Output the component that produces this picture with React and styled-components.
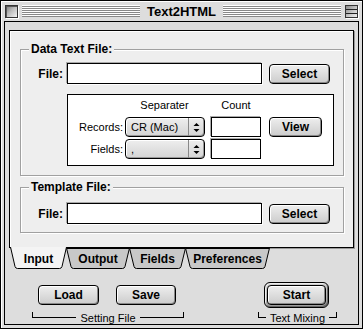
import React from 'react'
import styled, { createGlobalStyle } from 'styled-components'

const GlobalStyle = createGlobalStyle`
    html, body {
        margin: 0;
        padding: 0;
        background: #ffffff;
    }
    * {
        box-sizing: border-box;
    }
`;

const Window = styled.div`
    width: 363px;
    height: 329px;
    border: 1px solid #000;
    background: #dddddd;
    padding: 0 3px 3px 3px;
    display: flex;
    flex-direction: column;
    font-family: "Liberation Sans", Arial, sans-serif;
    color: #000;
    box-shadow: inset 1px 1px 0 #fff;
`;

const TitleBar = styled.div`
    height: 20px;
    display: flex;
    align-items: center;
    padding: 0 1px;
    gap: 4px;
`;

const CloseBox = styled.div`
    width: 13px;
    height: 13px;
    border: 1px solid #333;
    background: linear-gradient(135deg, #777 0%, #bbb 45%, #f4f4f4 100%);
    box-shadow: inset 1px 1px 0 #555, 1px 1px 0 #fff;
`;

const CollapseBox = styled.div`
    width: 13px;
    height: 13px;
    border: 1px solid #333;
    background: linear-gradient(135deg, #888 0%, #ccc 60%, #eee 100%);
    display: flex;
    flex-direction: column;
    justify-content: space-evenly;
    box-shadow: 1px 1px 0 #fff;
    & > span {
        height: 1px;
        background: #222;
    }
`;

const Stripes = styled.div`
    flex: 1;
    height: 12px;
    background: repeating-linear-gradient(to bottom, #ffffff 0 1px, #888888 1px 2px);
`;

const Title = styled.div`
    font-weight: bold;
    font-size: 13px;
    padding: 0 3px;
`;

const Content = styled.div`
    flex: 1;
    border: 1px solid #000;
    background: #dddddd;
    padding: 8px 4px 0 4px;
    display: flex;
    flex-direction: column;
`;

const TabPanel = styled.div`
    height: 218px;
    border: 1px solid #000;
    background: #eeeeee;
    box-shadow: inset 1px 1px 0 #fff, 1px 1px 0 #999;
    padding: 18px 9px 0 10px;
    display: flex;
    flex-direction: column;
    gap: 11px;
`;

const Group = styled.div`
    position: relative;
    border: 1px solid #a0a0a0;
    box-shadow: inset 1px 1px 0 #fff, 1px 1px 0 #fff;
    padding: ${p => p.$top}px 0 ${p => p.$bottom}px 0;
`;

const GroupTitle = styled.div`
    position: absolute;
    top: -8px;
    left: 8px;
    padding: 0 2px;
    background: #eeeeee;
    font-weight: bold;
    font-size: 12px;
    line-height: 14px;
`;

const Row = styled.div`
    display: flex;
    align-items: center;
`;

const BoldLabel = styled.div`
    width: 42px;
    text-align: right;
    font-weight: bold;
    font-size: 12px;
    margin-right: 4px;
`;

const TextField = styled.div`
    width: ${p => p.$w}px;
    height: ${p => p.$h || 21}px;
    border: 1px solid #000;
    background: #fff;
    box-shadow: -1px -1px 0 #aaa, 1px 1px 0 #fff;
`;

const Button = styled.div`
    width: ${p => p.$w}px;
    height: 20px;
    border: 1px solid #000;
    border-radius: 4px;
    background: linear-gradient(to bottom, #eeeeee, #cccccc);
    box-shadow: inset 1px 1px 0 #fff, inset -1px -1px 0 #888;
    display: flex;
    align-items: center;
    justify-content: center;
    font-weight: bold;
    font-size: 12px;
    margin-left: ${p => p.$ml || 0}px;
`;

const DefaultRing = styled.div`
    padding: 2px;
    border: 1px solid #000;
    border-radius: 6px;
    background: linear-gradient(to bottom, #d0d0d0, #999);
    box-shadow: inset 1px 1px 0 #eee, inset -1px -1px 0 #666;
`;

const SeparatorBox = styled.div`
    margin: 10px 0 0 46px;
    width: 267px;
    border: 1px solid #000;
    background: #fff;
    padding: 4px 0 6px 0;
    display: grid;
    grid-template-columns: 56px 81px 64px 53px;
    grid-template-rows: 16px 20px 20px;
    row-gap: 2px;
    font-size: 11px;
`;

const ColHead = styled.div`
    grid-column: ${p => p.$col};
    text-align: center;
    margin-left: ${p => p.$ml || 0}px;
    width: ${p => p.$w}px;
    line-height: 12px;
`;

const SmallLabel = styled.div`
    grid-column: 1;
    text-align: right;
    padding-right: 1px;
    align-self: center;
    font-size: 11px;
`;

const Popup = styled.div`
    grid-column: 2;
    margin-left: 1px;
    width: 80px;
    height: 20px;
    border: 1px solid #000;
    border-radius: 4px;
    background: linear-gradient(to bottom, #eee, #d4d4d4);
    box-shadow: inset 1px 1px 0 #fff, inset -1px -1px 0 #999;
    display: flex;
    align-items: stretch;
    font-size: 11px;
`;

const PopupText = styled.div`
    flex: 1;
    padding-left: 5px;
    display: flex;
    align-items: center;
`;

const PopupArrows = styled.div`
    width: 16px;
    border-left: 1px solid #888;
    display: flex;
    align-items: center;
    justify-content: center;
`;

const CountCell = styled.div`
    grid-column: 3;
    margin-left: 6px;
`;

const ViewCell = styled.div`
    grid-column: 4;
    align-self: center;
`;

const TabStrip = styled.div`
    display: flex;
    height: 21px;
    margin-left: 1px;
`;

const Tab = styled.div`
    position: relative;
    width: ${p => p.$w}px;
    height: ${p => (p.$active ? 22 : 21)}px;
    margin-top: ${p => (p.$active ? -1 : 0)}px;
    margin-right: -1px;
    z-index: ${p => (p.$active ? 2 : 1)};
    display: flex;
    align-items: center;
    justify-content: center;
    padding-top: ${p => (p.$active ? 1 : 0)}px;
    font-weight: bold;
    font-size: 12px;
    svg {
        position: absolute;
        inset: 0;
        z-index: -1;
    }
`;

const Bottom = styled.div`
    flex: 1;
    display: flex;
    align-items: flex-start;
`;

const ButtonGroup = styled.div`
    width: ${p => p.$w}px;
    margin-left: ${p => p.$ml}px;
    padding-top: ${p => p.$pt}px;
    display: flex;
    flex-direction: column;
`;

const ButtonRow = styled.div`
    display: flex;
    padding: 0 6px;
`;

const Bracket = styled.div`
    position: relative;
    margin-top: ${p => p.$mt}px;
    height: 6px;
    border: 1px solid #000;
    border-top: none;
    display: flex;
    justify-content: center;
`;

const BracketLabel = styled.div`
    position: absolute;
    top: 0;
    padding: 0 4px;
    background: #dddddd;
    font-size: 11px;
    line-height: 12px;
`;

function Arrows() {
    return (
        <svg width="7" height="11" viewBox="0 0 7 11">
            <path d="M3.5 1 L6.5 4 L0.5 4 Z" fill="#000" />
            <path d="M0.5 7 L6.5 7 L3.5 10 Z" fill="#000" />
        </svg>
    )
}

function TabShape({ w, h, active }) {
    const b = h - 0.5
    const d = `M0.5 0 L5 ${b - 2} Q5.6 ${b} 7.5 ${b} L${w - 7.5} ${b} Q${w - 5.6} ${b} ${w - 5} ${b - 2} L${w - 0.5} 0`
    return (
        <svg width={w} height={h} viewBox={`0 0 ${w} ${h}`}>
            <path d={d + ' Z'} fill={active ? '#f4f4f4' : '#c8c8c8'} stroke="none" />
            <path d={d} fill="none" stroke="#000" strokeWidth="1" />
            {!active && <path d={`M1 0.5 L${w - 1} 0.5`} stroke="#000" strokeWidth="1" />}
        </svg>
    )
}

const tabs = [
    { label: 'Input', w: 57, active: true },
    { label: 'Output', w: 64 },
    { label: 'Fields', w: 57 },
    { label: 'Preferences', w: 85 },
]

export default function App() {
    return (
        <>
            <GlobalStyle />
            <Window>
                <TitleBar>
                    <CloseBox />
                    <Stripes />
                    <Title>Text2HTML</Title>
                    <Stripes />
                    <CollapseBox><span /><span /></CollapseBox>
                </TitleBar>
                <Content>
                    <TabPanel>
                        <Group $top={13} $bottom={9}>
                            <GroupTitle>Data Text File:</GroupTitle>
                            <Row>
                                <BoldLabel>File:</BoldLabel>
                                <TextField $w={195} />
                                <Button $w={61} $ml={7}>Select</Button>
                            </Row>
                            <SeparatorBox>
                                <ColHead $col={2} $w={81}>Separater</ColHead>
                                <ColHead $col={3} $ml={6} $w={50}>Count</ColHead>
                                <div />
                                <SmallLabel>Records:</SmallLabel>
                                <Popup>
                                    <PopupText>CR (Mac)</PopupText>
                                    <PopupArrows><Arrows /></PopupArrows>
                                </Popup>
                                <CountCell><TextField $w={50} $h={20} /></CountCell>
                                <ViewCell><Button $w={53}>View</Button></ViewCell>
                                <SmallLabel>Fields:</SmallLabel>
                                <Popup>
                                    <PopupText>,</PopupText>
                                    <PopupArrows><Arrows /></PopupArrows>
                                </Popup>
                                <CountCell><TextField $w={50} $h={20} /></CountCell>
                            </SeparatorBox>
                        </Group>
                        <Group $top={15} $bottom={8}>
                            <GroupTitle>Template File:</GroupTitle>
                            <Row>
                                <BoldLabel>File:</BoldLabel>
                                <TextField $w={195} />
                                <Button $w={61} $ml={7}>Select</Button>
                            </Row>
                        </Group>
                    </TabPanel>
                    <TabStrip>
                        {tabs.map((t, i) => (
                            <Tab key={i} $w={t.w} $active={t.active}>
                                <TabShape w={t.w} h={t.active ? 22 : 21} active={t.active} />
                                {t.label}
                            </Tab>
                        ))}
                    </TabStrip>
                    <Bottom>
                        <ButtonGroup $w={152} $ml={23} $pt={16}>
                            <ButtonRow>
                                <Button $w={61}>Load</Button>
                                <Button $w={60} $ml={17}>Save</Button>
                            </ButtonRow>
                            <Bracket $mt={7}>
                                <BracketLabel>Setting File</BracketLabel>
                            </Bracket>
                        </ButtonGroup>
                        <ButtonGroup $w={79} $ml={74} $pt={13}>
                            <ButtonRow>
                                <DefaultRing>
                                    <Button $w={59}>Start</Button>
                                </DefaultRing>
                            </ButtonRow>
                            <Bracket $mt={4}>
                                <BracketLabel>Text Mixing</BracketLabel>
                            </Bracket>
                        </ButtonGroup>
                    </Bottom>
                </Content>
            </Window>
        </>
    )
}
